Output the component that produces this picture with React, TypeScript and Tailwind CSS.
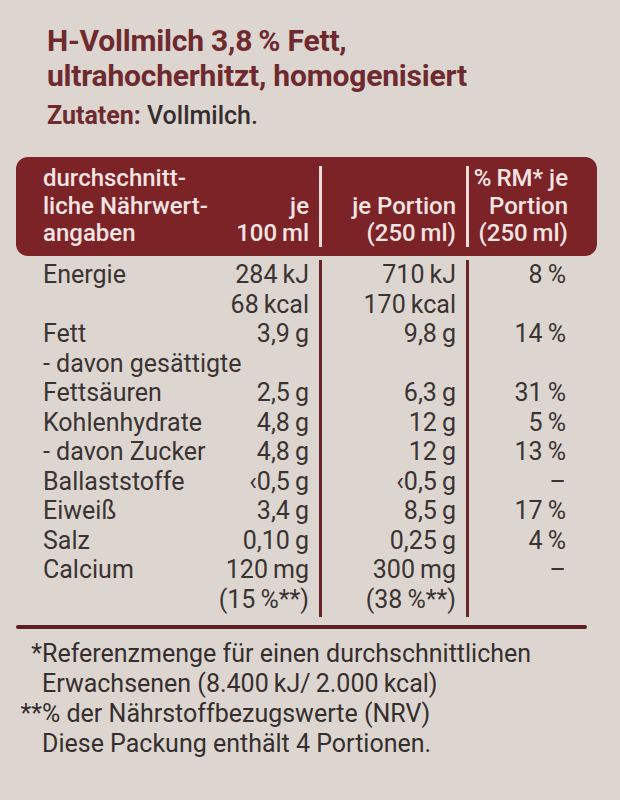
import React from "react";

type Row = { label: string; v1: string; v2: string; v3: string };

const T = "\u2009";
const rows: Row[] = [
  { label: "Energie", v1: `284${T}kJ`, v2: `710${T}kJ`, v3: `8${T}%` },
  { label: "", v1: `68${T}kcal`, v2: `170${T}kcal`, v3: "" },
  { label: "Fett", v1: `3,9${T}g`, v2: `9,8${T}g`, v3: `14${T}%` },
  { label: "- davon gesättigte", v1: "", v2: "", v3: "" },
  { label: "Fettsäuren", v1: `2,5${T}g`, v2: `6,3${T}g`, v3: `31${T}%` },
  { label: "Kohlenhydrate", v1: `4,8${T}g`, v2: `12${T}g`, v3: `5${T}%` },
  { label: "- davon Zucker", v1: `4,8${T}g`, v2: `12${T}g`, v3: `13${T}%` },
  { label: "Ballaststoffe", v1: `‹0,5${T}g`, v2: `‹0,5${T}g`, v3: "–" },
  { label: "Eiweiß", v1: `3,4${T}g`, v2: `8,5${T}g`, v3: `17${T}%` },
  { label: "Salz", v1: `0,10${T}g`, v2: `0,25${T}g`, v3: `4${T}%` },
  { label: "Calcium", v1: `120${T}mg`, v2: `300${T}mg`, v3: "–" },
  { label: "", v1: `(15${T}%**)`, v2: `(38${T}%**)`, v3: "" },
];

export default function App() {
  return (
    <div className="w-[620px] h-[800px] overflow-hidden bg-[#ddd6d0] font-[Roboto,sans-serif] text-[#3a3333]">
      {/* Title */}
      <div className="pl-[47px] pt-[23px]">
        <div className="text-[30px] leading-[35px] font-bold text-[#6e2a2f] tracking-[-0.2px]">
          <div>H-Vollmilch 3,8{T}% Fett,</div>
          <div>ultrahocherhitzt, homogenisiert</div>
        </div>
        <div className="mt-[7px] text-[25px] leading-[31px] font-bold">
          <span className="text-[#6e2a2f]">Zutaten: </span>
          <span className="text-[#352e2e] font-medium">Vollmilch.</span>
        </div>
      </div>

      {/* Table */}
      <div className="ml-[16px] w-[581px] mt-[26px]">
        {/* Header */}
        <div className="flex h-[99px] rounded-[12px] bg-[#7c2328] text-[#f4e4e2] text-[24px] leading-[27.5px] font-medium">
          <div className="w-[303px] flex justify-between pl-[27px] pr-[10px] pt-[8px]">
            <div>
              <div>durchschnitt-</div>
              <div>liche Nährwert-</div>
              <div>angaben</div>
            </div>
            <div className="text-right pt-[27.5px]">
              <div>je</div>
              <div>100{T}ml</div>
            </div>
          </div>
          <div className="w-[3px] my-[9px] bg-[#eedcda]" />
          <div className="w-[144px] text-right pr-[10px] pt-[35.5px]">
            <div>je Portion</div>
            <div>(250{T}ml)</div>
          </div>
          <div className="w-[3px] my-[9px] bg-[#eedcda]" />
          <div className="flex-1 text-right pr-[29px] pt-[8px]">
            <div>%{T}RM* je</div>
            <div>Portion</div>
            <div>(250{T}ml)</div>
          </div>
        </div>

        {/* Body */}
        <div className="flex pt-[4px] text-[25px] leading-[29.5px]">
          <div className="w-[303px] pl-[27px] pr-[10px]">
            {rows.map((r, i) => (
              <div key={i} className="flex justify-between whitespace-nowrap h-[29.5px]">
                <span>{r.label}</span>
                <span>{r.v1}</span>
              </div>
            ))}
          </div>
          <div className="w-[3px] bg-[#6a2429] mb-[-3px]" />
          <div className="w-[144px] pr-[10px] text-right">
            {rows.map((r, i) => (
              <div key={i} className="h-[29.5px] whitespace-nowrap">
                {r.v2}
              </div>
            ))}
          </div>
          <div className="w-[3px] bg-[#6a2429] mb-[-3px]" />
          <div className="flex-1 pr-[31px] text-right">
            {rows.map((r, i) => (
              <div key={i} className="h-[29.5px] whitespace-nowrap">
                {r.v3}
              </div>
            ))}
          </div>
        </div>

        {/* Bottom rule */}
        <div className="mt-[11px] w-[571px] h-[4px] rounded-full bg-[#5e1f24]" />
      </div>

      {/* Footnotes */}
      <div className="pl-[42px] pt-[10px] text-[25px] leading-[30px] text-[#352e2e]">
        <div className="relative">
          <span className="absolute right-full">*</span>Referenzmenge für einen durchschnittlichen
        </div>
        <div>Erwachsenen (8.400{T}kJ/{T}2.000{T}kcal)</div>
        <div className="relative">
          <span className="absolute right-full">**</span>% der Nährstoffbezugswerte (NRV)
        </div>
        <div>Diese Packung enthält 4 Portionen.</div>
      </div>
    </div>
  );
}
